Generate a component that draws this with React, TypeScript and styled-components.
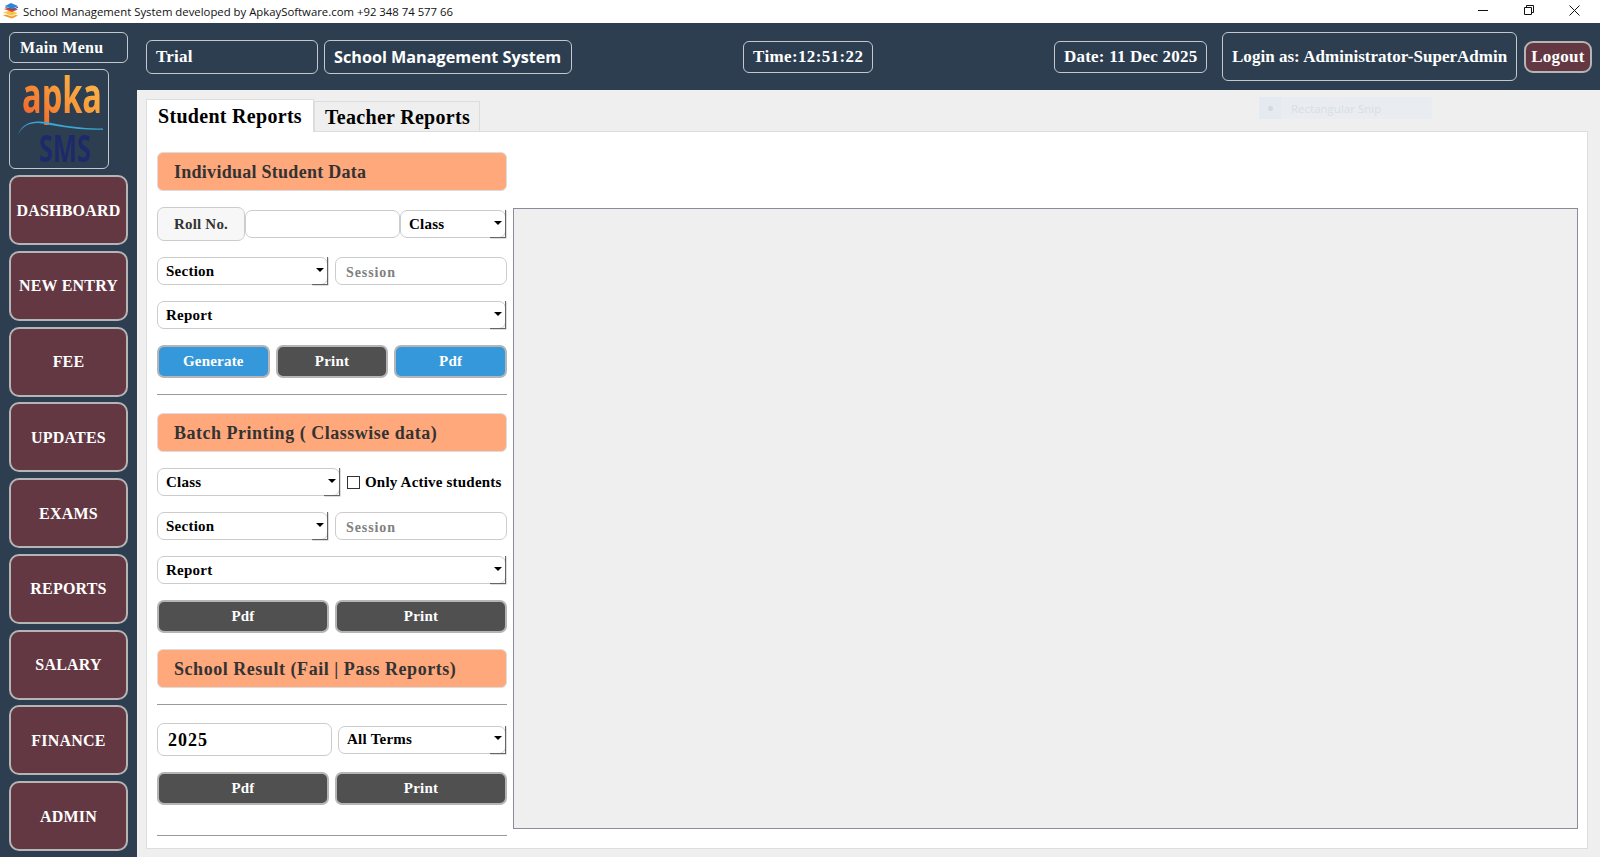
import React from "react";
import styled, { createGlobalStyle } from "styled-components";

const Global = createGlobalStyle`
  html, body { margin: 0; padding: 0; background: #efefef; }
  #root { width: 1600px; height: 857px; overflow: hidden; }
  * { box-sizing: border-box; }
`;
const serif = `"Liberation Serif", "Times New Roman", serif`;

const Page = styled.div`
  width: 1600px; height: 857px; display: flex; flex-direction: column;
  font-family: ${serif}; font-weight: 700;
`;
const TitleBar = styled.div`
  height: 23px; background: #fff; display: flex; align-items: center; padding: 0 0 3px 2px;
`;
const TitleText = styled.span`
  font-family: "Open Sans", "Noto Sans", sans-serif; font-weight: 400; font-size: 11.35px; color: #111; margin: 2px 0 0 4px;
`;
const WinControls = styled.div`
  margin-left: auto; display: flex; align-items: center; gap: 35.5px; padding-right: 20px;
`;
const Shell = styled.div`flex: 1; display: flex; min-height: 0;`;
const Sidebar = styled.nav`
  width: 137px; background: #2c3e50; padding: 9px 9px 0; display: flex; flex-direction: column;
`;
const MenuLabel = styled.div`
  width: 119px; height: 31px; border: 1px solid #c4c8cc; border-radius: 6px; color: #fff;
  font-size: 16px; letter-spacing: 0.35px; padding-left: 10px; line-height: 30px;
`;
const LogoBox = styled.div`
  width: 100px; height: 100px; margin-top: 6px; border: 1px solid #c4c8cc; border-radius: 6px;
`;
const LogoSvg = styled.svg`display: block; overflow: visible;`;
const NavList = styled.div`
  margin-top: 6px; display: flex; flex-direction: column; gap: 5.75px;
`;
const NavButton = styled.div`
  width: 119px; height: 70px; background: #633842; border: 2px solid #b5b5b5; border-radius: 10px;
  color: #fff; font-size: 16px; letter-spacing: 0.2px; display: flex; align-items: center; justify-content: center; padding-top: 1px;
`;
const Main = styled.div`flex: 1; display: flex; flex-direction: column; min-width: 0;`;
const Header = styled.header`
  height: 67px; background: #2c3e50; display: flex; align-items: center; padding-left: 9px; color: #fff;
`;
const Pill = styled.div<{ $w: number; $h: number; $ml?: number; $ls?: number }>`
  width: ${p => p.$w}px; height: ${p => p.$h}px; margin-left: ${p => p.$ml ?? 0}px;
  border: 1px solid #c4c8cc; border-radius: 6px; padding-left: 9px; display: flex; align-items: center;
  font-size: 17px; letter-spacing: ${p => p.$ls ?? 0.4}px; white-space: nowrap;
`;
const BrandPill = styled(Pill)`
  font-family: "Open Sans", "Noto Sans", sans-serif; font-size: 16.2px; letter-spacing: 0; font-weight: 700;
`;
const Logout = styled.div`
  width: 68px; height: 32px; margin-left: 7px; background: #633842; border: 2px solid #b5b5b5; border-radius: 9px;
  display: flex; align-items: center; justify-content: center; font-size: 17px; letter-spacing: 0.25px;
`;
const Content = styled.main`
  flex: 1; min-height: 0; background: #efefef; padding: 10px 12px 8px 9px; display: flex; flex-direction: column; position: relative;
`;
const Tabs = styled.div`display: flex; align-items: flex-end; height: 32px; margin-bottom: -1px; position: relative; z-index: 1;`;
const Tab = styled.div<{ $active?: boolean }>`
  height: ${p => (p.$active ? 33 : 31)}px; width: ${p => (p.$active ? 168 : 166)}px;
  background: ${p => (p.$active ? "#fff" : "#efefef")};
  border: 1px solid #ddd; border-bottom: ${p => (p.$active ? "none" : "1px solid #ddd")};
  padding-left: ${p => (p.$active ? 11 : 10)}px; padding-top: ${p => (p.$active ? 0 : 2)}px;
  font-size: 20px; letter-spacing: 0.3px; color: #000; display: flex; align-items: center;
`;
const Panel = styled.section`
  flex: 1; min-height: 0; background: #fff; border: 1px solid #ddd; padding: 20px 9px 12px 10px; display: flex; gap: 6px;
`;
const Left = styled.div`width: 350px; flex: none; display: flex; flex-direction: column; gap: 16px;`;
const Viewer = styled.div`
  flex: 1; margin: 56px 0 7px; background: #efefef; border: 1px solid #8a8d99;
`;
const Heading = styled.div<{ $mt?: number; $ls?: number }>`
  height: 39px; margin-top: ${p => p.$mt ?? 0}px; background: #ffa87c; border: 1px solid #ddd; border-radius: 6px;
  padding: 2px 0 0 16px; display: flex; align-items: center; font-size: 18px; letter-spacing: ${p => p.$ls ?? 0.45}px; color: #333;
`;
const Row = styled.div<{ $cols: string; $gap?: number; $mt?: number }>`
  display: grid; grid-template-columns: ${p => p.$cols}; column-gap: ${p => p.$gap ?? 6}px; align-items: center;
  margin-top: ${p => p.$mt ?? 0}px;
`;
const RollLabel = styled.div`
  height: 34px; background: #f7f7f7; border: 1px solid #ccc; border-radius: 7px; color: #333;
  font-size: 15px; letter-spacing: 0.2px; display: flex; align-items: center; justify-content: center;
`;
const Field = styled.input<{ $big?: boolean }>`
  width: 100%; height: ${p => (p.$big ? 33 : 28)}px; background: #fff; border: 1px solid #ccc; border-radius: 7px; outline: none;
  font-family: ${serif}; font-weight: 700; font-size: ${p => (p.$big ? 18 : 14)}px; letter-spacing: ${p => (p.$big ? 1 : 0.9)}px; color: #000;
  padding: ${p => (p.$big ? 2 : 3)}px 0 0 10px;
  &::placeholder { color: #808080; opacity: 1; }
`;
const SelectBox = styled.div`
  height: 28px; background: #fff; border: 1px solid #ccc; border-radius: 7px; display: flex; align-items: center; justify-content: space-between;
  padding-left: 8px; font-size: 15px; color: #000; letter-spacing: 0.25px;
`;
const Arrow = styled.span`
  width: 16px; height: 28px; margin: -1px -1px -1px 0; align-self: flex-start;
  border-right: 1px solid #666; border-bottom: 1px solid #666; box-shadow: 0.5px 0.5px 0 #bbb;
  display: flex; align-items: center; justify-content: center; padding-bottom: 2px;
  &::after { content: ""; border: 4px solid transparent; border-top: 4px solid #000; border-bottom: 0; }
`;
const Check = styled.label`
  display: flex; align-items: center; font-size: 15px; color: #000; letter-spacing: 0.2px; white-space: nowrap;
`;
const CheckInput = styled.input`
  appearance: none; width: 13px; height: 13px; margin: 0 5px 0 0; border: 1px solid #333; background: #fff; border-radius: 0;
`;
const Btn = styled.div<{ $blue?: boolean }>`
  height: 33px; background: ${p => (p.$blue ? "#3498db" : "#505050")}; border: 2px solid #b5b5b5; border-radius: 7px; color: #fff;
  font-size: 15px; letter-spacing: 0.2px; display: flex; align-items: center; justify-content: center;
`;
const Divider = styled.hr<{ $mt?: number }>`
  height: 1px; width: 100%; border: 0; background: #999; margin: ${p => p.$mt ?? 0}px 0 0;
`;
const SnipGhost = styled.div`
  position: absolute; left: 1122px; top: 7px; width: 173px; height: 22px; background: #e9edf1; display: flex; align-items: center;
  font-family: "Open Sans", "Noto Sans", sans-serif; font-weight: 400; font-size: 11.5px; color: #d9dee3;
`;
const SnipIcon = styled.span`
  width: 22px; height: 22px; background: #e4eaf0; display: flex; align-items: center; justify-content: center; margin-right: 10px;
  &::after { content: ""; width: 5px; height: 5px; border-radius: 50%; background: #d3d9de; }
`;

function Select({ label }: { label: string }) {
  return (
    <SelectBox>
      {label}
      <Arrow />
    </SelectBox>
  );
}

function AppIcon() {
  return (
    <svg width="17" height="17" viewBox="0 0 17 17">
      <path d="M1 13.5l6-2 9 2-6 3z" fill="#f29a2e" />
      <path d="M1 10.5l7-2 8 2.5-6 2.5z" fill="#f7c542" />
      <path d="M2 11l8 2.5 6-2.5v1l-6 2.5-8-2.5z" fill="#fff3d0" />
      <path d="M2 7l7-2 7 2.5-6 2.5z" fill="#e5432f" />
      <path d="M3 4l6-3 7 3-6 3z" fill="#2f86d8" />
      <path d="M3 4.5l7 3 6-3v1.2l-6 2.6-7-3z" fill="#1a5fa8" />
    </svg>
  );
}

function Logo() {
  return (
    <LogoSvg width="98" height="98" viewBox="0 0 98 98">
      <defs>
        <linearGradient id="apka" x1="0" y1="1" x2="1" y2="0">
          <stop offset="0" stopColor="#ee5a2a" />
          <stop offset="0.5" stopColor="#f89a3a" />
          <stop offset="1" stopColor="#fdc552" />
        </linearGradient>
        <filter id="soft"><feGaussianBlur stdDeviation="0.5" /></filter>
      </defs>
      <text x="12" y="43" fontFamily="'Open Sans', sans-serif" fontSize="50" fontWeight="700" textLength="80" lengthAdjust="spacingAndGlyphs" fill="url(#apka)" filter="url(#soft)">apka</text>
      <path d="M8 65C11 55 20 51 30 51.5C44 52.5 60 58.5 93 58.5L93 59.7C60 60.2 44 54.7 30 53.2C20 52.5 12 56 8 65Z" fill="#3aa6cf" filter="url(#soft)" />
      <text x="29" y="92" fontFamily="'Open Sans', sans-serif" fontSize="38" fontWeight="700" textLength="52" lengthAdjust="spacingAndGlyphs" fill="#1f2a6b" filter="url(#soft)">SMS</text>
    </LogoSvg>
  );
}

const navItems = ["DASHBOARD", "NEW ENTRY", "FEE", "UPDATES", "EXAMS", "REPORTS", "SALARY", "FINANCE", "ADMIN"];

export default function App() {
  return (
    <Page>
      <Global />
      <TitleBar>
        <AppIcon />
        <TitleText>School Management System developed by ApkaySoftware.com +92 348 74 577 66</TitleText>
        <WinControls>
          <svg width="10" height="10" viewBox="0 0 10 10"><path d="M0 5.5h10" stroke="#111" fill="none" /></svg>
          <svg width="10" height="10" viewBox="0 0 10 10"><path d="M0.5 2.5h7v7h-7zM2.5 2.5v-2h7v7h-2" stroke="#111" fill="none" /></svg>
          <svg width="11" height="11" viewBox="0 0 11 11"><path d="M0.5 0.5l10 10M10.5 0.5l-10 10" stroke="#111" fill="none" /></svg>
        </WinControls>
      </TitleBar>
      <Shell>
        <Sidebar>
          <MenuLabel>Main Menu</MenuLabel>
          <LogoBox><Logo /></LogoBox>
          <NavList>
            {navItems.map(n => <NavButton key={n}>{n}</NavButton>)}
          </NavList>
        </Sidebar>
        <Main>
          <Header>
            <Pill $w={172} $h={34} $ls={0.25}>Trial</Pill>
            <BrandPill $w={248} $h={34} $ml={6}>School Management System</BrandPill>
            <Pill $w={130} $h={32} $ml={171} $ls={0.37}>Time:12:51:22</Pill>
            <Pill $w={153} $h={32} $ml={181} $ls={0.21}>Date: 11 Dec 2025</Pill>
            <Pill $w={295} $h={49} $ml={15} $ls={0.03}>Login as: Administrator-SuperAdmin</Pill>
            <Logout>Logout</Logout>
          </Header>
          <Content>
            <SnipGhost><SnipIcon />Rectangular Snip</SnipGhost>
            <Tabs>
              <Tab $active>Student Reports</Tab>
              <Tab>Teacher Reports</Tab>
            </Tabs>
            <Panel>
              <Left>
                <Heading $ls={0.27}>Individual Student Data</Heading>
                <Row $cols="88px 155px 106px" $gap={0}>
                  <RollLabel>Roll No.</RollLabel>
                  <Field readOnly />
                  <Select label="Class" />
                </Row>
                <Row $cols="171px 172px" $gap={7}>
                  <Select label="Section" />
                  <Field readOnly placeholder="Session" />
                </Row>
                <Row $cols="349px">
                  <Select label="Report" />
                </Row>
                <Row $cols="1fr 1fr 1fr">
                  <Btn $blue>Generate</Btn>
                  <Btn>Print</Btn>
                  <Btn $blue>Pdf</Btn>
                </Row>
                <Divider />
                <Heading $mt={2} $ls={0.51}>Batch Printing ( Classwise data)</Heading>
                <Row $cols="183px 1fr" $gap={7}>
                  <Select label="Class" />
                  <Check><CheckInput type="checkbox" />Only Active students</Check>
                </Row>
                <Row $cols="171px 172px" $gap={7}>
                  <Select label="Section" />
                  <Field readOnly placeholder="Session" />
                </Row>
                <Row $cols="349px">
                  <Select label="Report" />
                </Row>
                <Row $cols="1fr 1fr">
                  <Btn>Pdf</Btn>
                  <Btn>Print</Btn>
                </Row>
                <Heading $ls={0.54}>School Result (Fail | Pass Reports)</Heading>
                <Divider />
                <Row $cols="175px 168px" $mt={2}>
                  <Field $big readOnly value="2025" />
                  <Select label="All Terms" />
                </Row>
                <Row $cols="1fr 1fr">
                  <Btn>Pdf</Btn>
                  <Btn>Print</Btn>
                </Row>
                <Divider $mt={14} />
              </Left>
              <Viewer />
            </Panel>
          </Content>
        </Main>
      </Shell>
    </Page>
  );
}
